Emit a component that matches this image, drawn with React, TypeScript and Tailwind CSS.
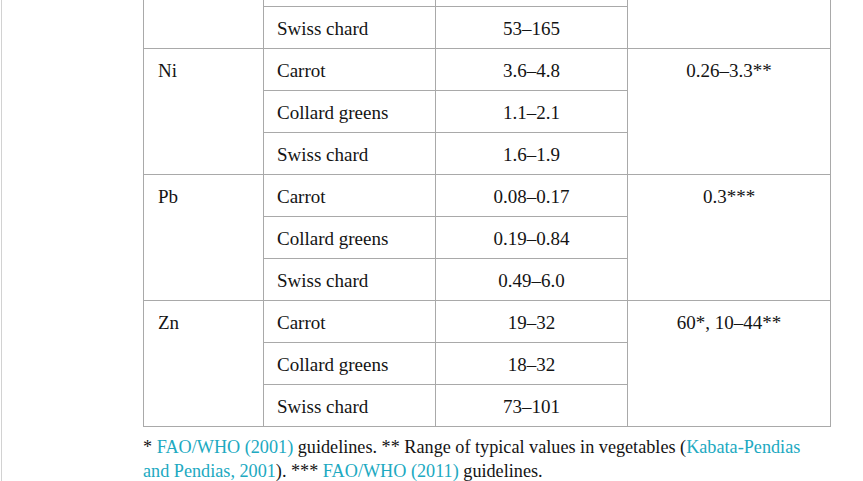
const groups = [
  {
    element: '',
    limit: '',
    rows: [
      { veg: '', value: '', partial: true },
      { veg: 'Swiss chard', value: '53–165' },
    ],
  },
  {
    element: 'Ni',
    limit: '0.26–3.3**',
    rows: [
      { veg: 'Carrot', value: '3.6–4.8' },
      { veg: 'Collard greens', value: '1.1–2.1' },
      { veg: 'Swiss chard', value: '1.6–1.9' },
    ],
  },
  {
    element: 'Pb',
    limit: '0.3***',
    rows: [
      { veg: 'Carrot', value: '0.08–0.17' },
      { veg: 'Collard greens', value: '0.19–0.84' },
      { veg: 'Swiss chard', value: '0.49–6.0' },
    ],
  },
  {
    element: 'Zn',
    limit: '60*, 10–44**',
    rows: [
      { veg: 'Carrot', value: '19–32' },
      { veg: 'Collard greens', value: '18–32' },
      { veg: 'Swiss chard', value: '73–101' },
    ],
  },
];

const cell = 'border-b border-r border-[#a9a9a9] leading-[25px]';
const span: Record<number, string> = { 2: 'row-span-2', 3: 'row-span-3' };
const rowH = (partial?: boolean) => (partial ? 'h-[7px]' : 'h-[42px] pt-[9px]');

function Link({ children }: { children: React.ReactNode }) {
  return <span className="text-[#20a9c1]">{children}</span>;
}

export default function App() {
  return (
    <div
      className="min-h-[481px] ml-px border-l border-[#d2d2d2] bg-white pl-[141px] text-[#141414]"
      style={{ fontFamily: '"Liberation Serif", "Times New Roman", serif' }}
    >
      <div className="grid w-[688px] grid-cols-[121px_172px_192px_203px] text-[19px]">
        {groups.map((g, gi) =>
          g.rows.map((r, ri) => [
            ri === 0 && (
              <div key={`e${gi}`} className={`${cell} ${span[g.rows.length]} border-l pl-[14px] pt-[9px]`}>
                {g.element}
              </div>
            ),
            <div key={`v${gi}-${ri}`} className={`${cell} ${rowH(r.partial)} pl-[13px]`}>
              {r.veg}
            </div>,
            <div key={`n${gi}-${ri}`} className={`${cell} ${rowH(r.partial)} text-center`}>
              {r.value}
            </div>,
            ri === 0 && (
              <div key={`l${gi}`} className={`${cell} ${span[g.rows.length]} pt-[9px] text-center`}>
                {g.limit}
              </div>
            ),
          ])
        )}
      </div>
      <p className="w-[675px] pt-[8px] text-[18.2px] leading-[24px]">
        * <Link>FAO/WHO (2001)</Link> guidelines. ** Range of typical values in vegetables (
        <Link>Kabata-Pendias and Pendias, 2001</Link>). *** <Link>FAO/WHO (2011)</Link> guidelines.
      </p>
    </div>
  );
}
